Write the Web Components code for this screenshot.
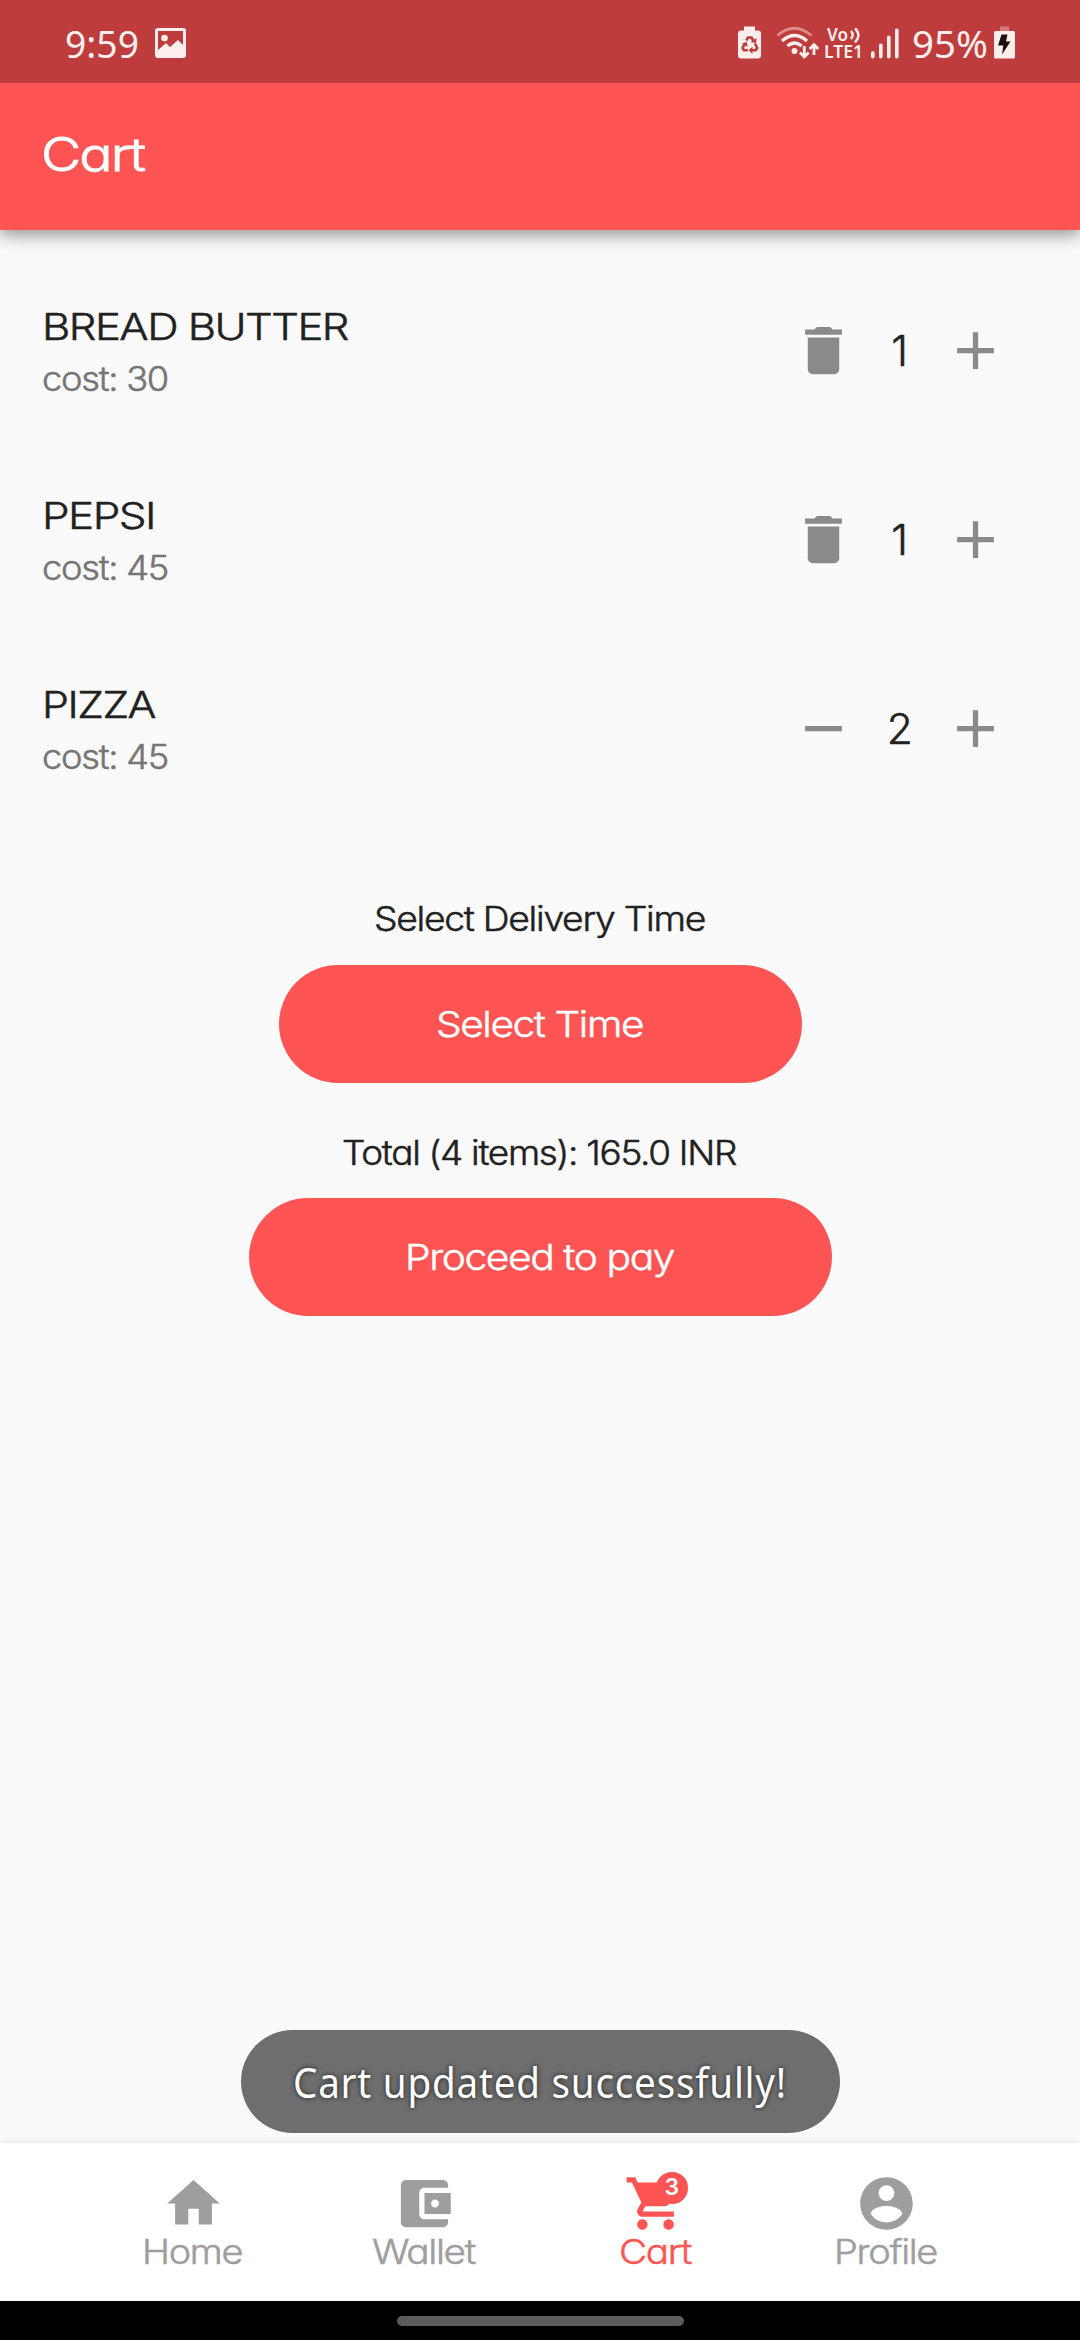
<!DOCTYPE html>
<html lang="en">
<head>
<meta charset="utf-8">
<title>Cart</title>
<style>
html,body{margin:0;padding:0;background:#fafafa}
body{font-family:Inter,"Liberation Sans",sans-serif;color:#212121}
</style>
</head>
<body>
<cart-screen></cart-screen>
<script>
const define=(name,html,setup)=>customElements.define(name,class extends HTMLElement{
  connectedCallback(){
    if(this.shadowRoot)return;
    this.attachShadow({mode:'open'}).innerHTML=html;
    if(setup)setup(this,this.shadowRoot);
  }
});

const ICONS={
  delete:'<path d="M6 19c0 1.1.9 2 2 2h8c1.1 0 2-.9 2-2V7H6v12zM19 4h-3.5l-1-1h-5l-1 1H5v2h14V4z"/>',
  add:'<path d="M19 13h-6v6h-2v-6H5v-2h6V5h2v6h6v2z"/>',
  remove:'<path d="M19 13H5v-2h14v2z"/>',
  home:'<path d="M10 20v-6h4v6h5v-8h3L12 3 2 12h3v8z"/>',
  wallet:'<path d="M21 18v1c0 1.100-.9 2-2 2H5c-1.110 0-2-.9-2-2V5c0-1.100.890-2 2-2h14c1.100 0 2 .9 2 2v1h-9c-1.110 0-2 .9-2 2v8c0 1.100.890 2 2 2h9zm-9-2h10V8H12v8zm4-2.500c-.830 0-1.500-.670-1.500-1.500s.670-1.500 1.500-1.500 1.500.670 1.500 1.500-.670 1.500-1.500 1.500z"/>',
  cart:'<path d="M7 18c-1.100 0-1.990.9-1.990 2S5.900 22 7 22s2-.9 2-2-.9-2-2-2zM1 2v2h2l3.600 7.590-1.350 2.450c-.160.280-.250.610-.250.960 0 1.100.9 2 2 2h12v-2H7.420c-.140 0-.250-.110-.250-.250l.030-.120.900-1.630h7.450c.750 0 1.410-.410 1.750-1.030l3.580-6.490c.080-.140.120-.310.120-.480 0-.550-.450-1-1-1H5.210l-.940-2H1zm16 16c-1.100 0-1.990.9-1.990 2s.890 2 1.990 2 2-.9 2-2-.9-2-2-2z"/>',
  profile:'<path d="M12 2C6.480 2 2 6.480 2 12s4.480 10 10 10 10-4.480 10-10S17.520 2 12 2zm0 3c1.660 0 3 1.340 3 3s-1.340 3-3 3-3-1.340-3-3 1.340-3 3-3zm0 14.200c-2.500 0-4.710-1.280-6-3.220.030-1.990 4-3.080 6-3.080 1.990 0 5.970 1.090 6 3.080-1.290 1.940-3.500 3.220-6 3.220z"/>'
};

define('md-icon','<style>:host{display:block;width:63px;height:63px}svg{display:block;width:100%;height:100%;fill:currentColor}</style><svg viewBox="0 0 24 24"></svg>',
  (el,root)=>{root.querySelector('svg').innerHTML=ICONS[el.getAttribute('name')]});

/* One line of text, scaled horizontally to an exact advance width. */
define('fit-text','<style>:host{display:block;white-space:nowrap;font-feature-settings:"cv11" 1}span{display:inline-block;transform-origin:0 50%;letter-spacing:var(--tracking,0)}</style><span><slot></slot></span>',
  (el,root)=>{
    const span=root.querySelector('span'),w=+el.getAttribute('w');
    el.style.width=w+'px';
    span.style.transform=`scaleX(${w/span.getBoundingClientRect().width})`;
  });

define('status-bar',`<style>
:host{display:flex;position:relative;z-index:1;height:83px;background:#bf3c3c;color:#fdeeee;align-items:center;justify-content:space-between;padding:3px 65px 0 65px;box-sizing:border-box;font-family:"Noto Sans",sans-serif;font-weight:400;-webkit-text-stroke:0;--tracking:0;font-size:39px;line-height:54px}
div{display:flex;align-items:center}svg{display:block;fill:currentColor}
.volte{flex-direction:column;align-items:flex-start;width:39px;margin-left:4px;font-size:17.500px;line-height:17px;font-weight:600}
.vo{padding-left:3px;gap:2px}
</style>
<div><fit-text w="74">9:59</fit-text>
<svg style="margin-left:16px" width="31" height="30" viewBox="0 0 31 30"><path fill-rule="evenodd" d="M3 0h25a3 3 0 0 1 3 3v24a3 3 0 0 1-3 3H3a3 3 0 0 1-3-3V3a3 3 0 0 1 3-3zM3 3v19l8-7 4 4 8-7 5 5V3z"/><circle cx="9.500" cy="10" r="3.300"/></svg></div>
<div>
<svg width="82" height="34" viewBox="0 0 82 34">
 <path d="M6 0.500h11v4h3a3 3 0 0 1 3 3v22a3 3 0 0 1-3 3H3a3 3 0 0 1-3-3v-22a3 3 0 0 1 3-3h3z"/>
 <g fill="none" stroke="#bf3c3c" stroke-width="2.600"><path d="M8.300 14.500l1.700-3h3.500l2 3.500M17 17.500l2.200 4.500-1.500 2.300h-4M9.800 24.300H6L4.600 22l2.200-4.200"/></g>
 <path fill="#bf3c3c" d="M12.500 16l5.500 1 .5-5zM14.500 20.800v7l-4-3.500zM3.800 18l4.700-2.200 1.200 5z"/>
 <g fill="none" stroke="currentColor"><path stroke-width="2.800" opacity=".45" d="M39.500 9.500Q56 -5 73.500 9.500"/><path stroke-width="3.200" d="M44 15Q56.500 4 69 15"/><path stroke-width="3.200" d="M49.300 20Q56.500 14 63.700 20"/></g>
 <circle cx="56.500" cy="25" r="3"/>
 <g fill="none" stroke="currentColor" stroke-width="2.800"><path d="M66.300 20v10.500M62 26.500l4.300 4.500 4.300-4.500M76 29V19M71.700 23l4.300-4.500 4.300 4.500"/></g>
</svg>
<div class="volte"><div class="vo"><fit-text w="21">Vo</fit-text><svg width="11" height="16" viewBox="0 0 11 16"><g fill="none" stroke="currentColor" stroke-width="2.400"><path d="M1 4q3.500 4 0 8M5 1.500q7 6.500 0 14"/></g></svg></div><fit-text w="39">LTE1</fit-text></div>
<svg width="49" height="34" viewBox="0 0 49 34"><rect x="8" y="25" width="3.600" height="7.500" rx="1.800"/><rect x="16" y="17.500" width="3.600" height="15" rx="1.800"/><rect x="24" y="9.500" width="3.600" height="23" rx="1.800"/><rect x="32" y="2.500" width="3.600" height="30" rx="1.800"/></svg>
<fit-text w="76">95%</fit-text>
<svg width="21" height="34" viewBox="0 0 21 34" style="margin-left:6px"><path opacity=".35" d="M6 .5h9v4.500H6z"/><rect y="5" width="21" height="27.500" rx="1.500"/><path fill="#201010" d="M7.500 8.500h6l-1.500 7h4.500L8 28.500l1.300-9H4z"/></svg>
</div>`);

define('app-bar',`<style>:host{display:flex;align-items:center;height:147px;padding:0 0 6px 41px;box-sizing:border-box;background:#ff5454;color:#fff;font-size:46px;line-height:64px;-webkit-text-stroke:.9px;box-shadow:0 5px 10px -2px rgba(0,0,0,.2),0 10px 13px rgba(0,0,0,.14),0 3px 26px rgba(0,0,0,.1)}</style><slot></slot>`);

define('cart-line',`<style>
:host{display:flex;align-items:center;justify-content:space-between;height:189px;padding:0 66px 0 42px;box-sizing:border-box}
.n{font-size:37px;line-height:56px;padding-top:2px}.c{font-size:33.500px;line-height:49px;color:#757575}
.q{display:grid;grid-template-columns:repeat(3,76.200px);align-items:center;justify-items:center;color:#8a8a8a}
.v{font-size:42.500px;line-height:60px;color:#212121}
</style>
<div><div class="n"><slot name="name"></slot></div><div class="c"><slot name="cost"></slot></div></div>
<div class="q"><slot name="less"></slot><span class="v"><slot name="count"></slot></span><md-icon name="add"></md-icon></div>`);

define('pill-button',`<style>:host{display:flex;align-items:center;justify-content:center;height:118px;border-radius:59px;background:#ff5454;color:#fff;font-size:36px;line-height:50px}</style><slot></slot>`);

define('toast-message',`<style>:host{display:flex;align-items:center;justify-content:center;width:599px;height:103px;border-radius:52px;background:#6e6e6e;color:#fff;font-family:"Noto Sans",sans-serif;font-weight:400;-webkit-text-stroke:0;--tracking:.02em;font-size:41px;line-height:60px;text-shadow:0 0 5px rgba(0,0,0,.75);padding-top:1px;box-sizing:border-box}</style><slot></slot>`);

define('nav-item',`<style>
:host{display:flex;flex-direction:column;align-items:center;width:231.200px;color:#9e9e9e;font-size:34px;line-height:48px;padding-top:29px;position:relative}
:host([active]){color:#ff5454}
.b{position:absolute;left:116px;top:29px;width:31.500px;height:31.500px;border-radius:50%;background:#ff5454;color:#fff;font-size:23px;font-weight:600;-webkit-text-stroke:0;line-height:31px;text-align:center}
::slotted(fit-text){margin-top:-7px}
</style><slot></slot>`,
 (el,r)=>{
   const icon=document.createElement('md-icon');
   icon.setAttribute('name',el.getAttribute('icon'));
   r.querySelector('slot').before(icon);
   if(el.hasAttribute('badge'))r.append(Object.assign(document.createElement('span'),{className:'b',textContent:el.getAttribute('badge')}));
 });

define('nav-bar',`<style>:host{display:flex;height:158px;background:#fff;justify-content:center;box-shadow:0 -1px 8px rgba(0,0,0,.09)}</style><slot></slot>`);
define('gesture-bar',`<style>:host{display:flex;height:39px;background:#000;justify-content:center;align-items:center}i{display:block;width:287px;height:10px;border-radius:5px;background:#5c5c5c}</style><i></i>`);

define('cart-screen',`<style>
:host{display:flex;flex-direction:column;width:1080px;height:2340px;background:#fafafa;overflow:hidden;font-weight:300;-webkit-text-stroke:.5px;--tracking:-.035em}
main{flex:1;display:flex;flex-direction:column;padding-top:26px}
.l{font-size:34px;line-height:45px;align-self:center}
pill-button{align-self:center}
.l,pill-button fit-text,nav-item fit-text{padding-right:2px}
toast-message{align-self:center;margin:auto 0 10px}
</style>
<status-bar></status-bar>
<app-bar><fit-text w="103">Cart</fit-text></app-bar>
<main>
<cart-line><fit-text slot="name" w="306">BREAD BUTTER</fit-text><fit-text slot="cost" w="126">cost: 30</fit-text><md-icon slot="less" name="delete"></md-icon><span slot="count">1</span></cart-line>
<cart-line><fit-text slot="name" w="113">PEPSI</fit-text><fit-text slot="cost" w="126">cost: 45</fit-text><md-icon slot="less" name="delete"></md-icon><span slot="count">1</span></cart-line>
<cart-line><fit-text slot="name" w="113">PIZZA</fit-text><fit-text slot="cost" w="126">cost: 45</fit-text><md-icon slot="less" name="remove"></md-icon><span slot="count">2</span></cart-line>
<fit-text class="l" w="331" style="margin-top:73px">Select Delivery Time</fit-text>
<pill-button style="width:523px;margin-top:24px"><fit-text w="207">Select Time</fit-text></pill-button>
<fit-text class="l" w="394" style="margin-top:47px">Total (4 items): 165.0 INR</fit-text>
<pill-button style="width:583px;margin-top:23px"><fit-text w="269">Proceed to pay</fit-text></pill-button>
<toast-message><fit-text w="494">Cart updated successfully!</fit-text></toast-message>
</main>
<nav-bar>
<nav-item icon="home"><fit-text w="100">Home</fit-text></nav-item>
<nav-item icon="wallet"><fit-text w="103">Wallet</fit-text></nav-item>
<nav-item icon="cart" badge="3" active><fit-text w="72">Cart</fit-text></nav-item>
<nav-item icon="profile"><fit-text w="103">Profile</fit-text></nav-item>
</nav-bar>
<gesture-bar></gesture-bar>`);
</script>
</body>
</html>
